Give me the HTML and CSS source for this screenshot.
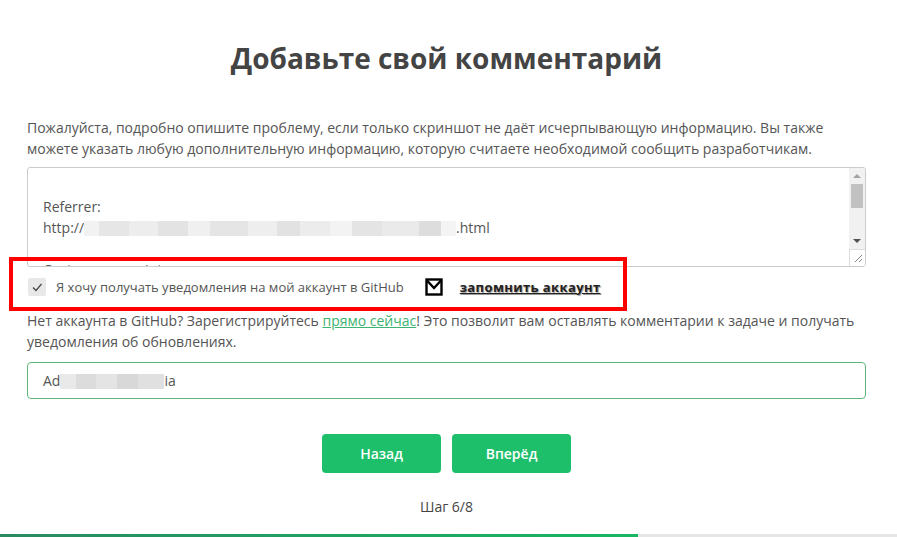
FILE: index.html
```html
<!DOCTYPE html>
<html lang="ru">
<head>
<meta charset="utf-8">
<title>Добавьте свой комментарий</title>
<link rel="stylesheet" href="styles.css">
</head>
<body>
<div class="page">
  <h1 class="title">Добавьте свой комментарий</h1>
  <p class="text text-intro">Пожалуйста, подробно опишите проблему, если только скриншот не даёт исчерпывающую информацию. Вы также можете указать любую дополнительную информацию, которую считаете необходимой сообщить разработчикам.</p>
  <div class="area">
    <div class="area-text">
      <div class="line">&nbsp;</div>
      <div class="line">Referrer:</div>
      <div class="line">http://<span class="blur blur-url"></span>.html</div>
      <div class="line">&nbsp;</div>
      <div class="line">Custom userscripts:</div>
    </div>
    <div class="scroll">
      <div class="arrow up"></div>
      <div class="thumb"></div>
      <div class="track"></div>
      <div class="arrow down"></div>
      <div class="grip">
        <svg width="16" height="16" viewBox="0 0 16 16"><path d="M13 6 L6 13 M13 10 L10 13" stroke="#888" stroke-width="1" fill="none"/></svg>
      </div>
    </div>
  </div>
  <div class="checks">
    <div class="check-grey">
      <svg width="18" height="18" viewBox="0 0 18 18"><path d="M5 9.5 L8 12.5 L13.5 6" stroke="#444" stroke-width="1.2" fill="none"/></svg>
    </div>
    <span class="check-label">Я хочу получать уведомления на мой аккаунт в GitHub</span>
    <div class="check-black">
      <svg width="18" height="18" viewBox="0 0 18 18"><rect x="1.5" y="1.5" width="15" height="15" fill="#fff" stroke="#000" stroke-width="2.4"/><path d="M2 2.5 L9 10 L16 2.5" stroke="#000" stroke-width="2.4" fill="none"/></svg>
    </div>
    <span class="remember">запомнить аккаунт</span>
  </div>
  <p class="text text-reg">Нет аккаунта в GitHub? Зарегистрируйтесь <a class="link" href="#">прямо сейчас</a>! Это позволит вам оставлять комментарии к задаче и получать уведомления об обновлениях.</p>
  <div class="input">Ad<span class="blur blur-name"></span>ia</div>
  <div class="buttons">
    <button class="btn">Назад</button>
    <button class="btn">Вперёд</button>
  </div>
  <div class="step">Шаг 6/8</div>
</div>
<div class="progress"><div class="progress-fill"></div></div>
<div class="annot"></div>
</body>
</html>
```
FILE: styles.css
```css
html, body {
  margin: 0;
  padding: 0;
  background: #fff;
}
body {
  font-family: "Open Sans", "Noto Sans", sans-serif;
  color: #555;
  width: 897px;
  height: 537px;
  overflow: hidden;
  position: relative;
}
.page {
  width: 839px;
  padding-left: 27px;
  display: flex;
  flex-direction: column;
}
.title {
  margin: 36px 0 0 0;
  font-size: 28px;
  line-height: 44px;
  font-weight: 700;
  color: #444;
  text-align: center;
}
.text {
  margin: 0;
  font-size: 14px;
  line-height: 21px;
  color: #555;
}
.text-intro {
  margin-top: 37px;
}
.area {
  margin-top: 8px;
  height: 98px;
  border: 1px solid #ccc;
  border-radius: 3px;
  display: flex;
  overflow: hidden;
}
.area-text {
  flex: 1;
  padding: 7px 15px 0 15px;
  font-size: 14px;
  line-height: 21px;
  color: #555;
  white-space: nowrap;
}
.blur {
  display: inline-block;
  vertical-align: -3px;
  height: 15px;
}
.blur-url {
  width: 372px;
  background: linear-gradient(90deg,
    #f2f2f2 0 4%, #e6e6e6 4% 12%, #ededed 12% 20%, #e3e3e3 20% 28%, #f0f0f0 28% 34%,
    #e5e5e5 34% 44%, #eeeeee 44% 52%, #e2e2e2 52% 58%, #ececec 58% 66%, #f3f3f3 66% 72%,
    #e4e4e4 72% 80%, #eaeaea 80% 90%, #dddddd 90% 96%, #f4f4f4 96% 100%);
}
.blur-name {
  width: 104px;
  background: linear-gradient(90deg,
    #e9e9e9 0 15%, #dcdcdc 15% 35%, #e4e4e4 35% 55%, #d8d8d8 55% 75%, #e0e0e0 75% 100%);
}
.scroll {
  width: 16px;
  display: flex;
  flex-direction: column;
  background: #f1f1f1;
}
.arrow {
  height: 16px;
  display: flex;
  align-items: center;
  justify-content: center;
}
.arrow::before {
  content: "";
  width: 0;
  height: 0;
  border-left: 4px solid transparent;
  border-right: 4px solid transparent;
}
.arrow.up::before {
  border-bottom: 4px solid #a3a3a3;
}
.arrow.down::before {
  border-top: 4px solid #505050;
}
.thumb {
  margin: 0 2px;
  height: 24px;
  background: #c1c1c1;
}
.track {
  flex: 1;
}
.grip {
  height: 16px;
  background: #fff;
  border-left: 1px solid #ddd;
  border-top: 1px solid #ddd;
}
.grip svg {
  display: block;
  margin-left: -1px;
  margin-top: -1px;
}
.checks {
  height: 39px;
  padding-bottom: 4px;
  display: flex;
  align-items: center;
}
.check-grey {
  width: 18px;
  height: 18px;
  background: #e8e8e8;
  border-radius: 2px;
  margin-left: 1px;
}
.check-grey svg, .check-black svg {
  display: block;
}
.check-label {
  margin-left: 10px;
  font-size: 13px;
  color: #555;
}
.check-black {
  margin-left: 21px;
  width: 18px;
  height: 18px;
}
.remember {
  margin-left: 17px;
  font-size: 13px;
  letter-spacing: 0.4px;
  font-weight: 700;
  color: #222;
  text-decoration: underline;
  text-shadow: 1px 1px 1px #999;
}
.text-reg {
  margin-top: 0;
}
.link {
  color: #3cb371;
  text-decoration: underline;
}
.input {
  margin-top: 10px;
  height: 35px;
  border: 1px solid #5cb87a;
  border-radius: 4px;
  padding: 0 15px;
  font-size: 14px;
  line-height: 35px;
  color: #555;
  white-space: nowrap;
}
.buttons {
  margin-top: 35px;
  display: flex;
  justify-content: center;
  gap: 11px;
}
.btn {
  width: 119px;
  height: 39px;
  border: none;
  border-radius: 4px;
  background: #1dbf6b;
  color: #fff;
  font-family: "Open Sans", "Noto Sans", sans-serif;
  font-size: 14px;
  font-weight: 600;
  cursor: pointer;
}
.step {
  margin-top: 24px;
  text-align: center;
  font-size: 14px;
  color: #444;
}
.progress {
  position: absolute;
  left: 0;
  bottom: 0;
  width: 897px;
  height: 3px;
  background: #e6e6e6;
}
.progress-fill {
  width: 638px;
  height: 3px;
  background: linear-gradient(90deg, #2a8a62, #19b763);
}
.annot {
  position: absolute;
  left: 9px;
  top: 257px;
  width: 610px;
  height: 46px;
  border: 4px solid #ff0000;
}
```
